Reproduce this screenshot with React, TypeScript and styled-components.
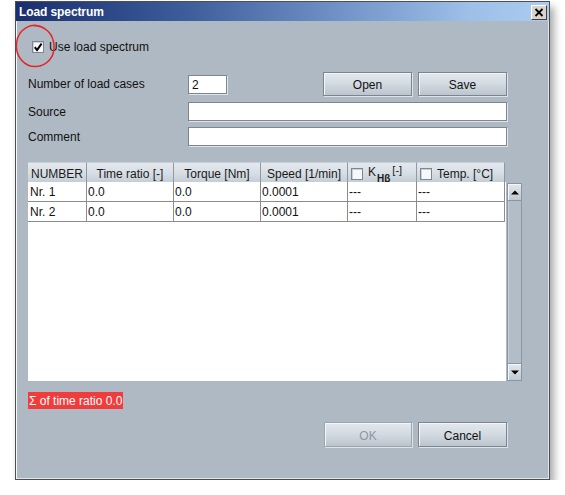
import React from "react";
import styled, { createGlobalStyle } from "styled-components";

const Global = createGlobalStyle`
  html, body { margin: 0; padding: 0; background: #ffffff; }
  body { font-family: "Liberation Sans", Arial, sans-serif; font-size: 12px; color: #111; }
  * { box-sizing: border-box; }
`;

const Window = styled.div`
  position: relative;
  margin: 1px 0 0 15px;
  width: 535px;
  height: 479px;
  border: 1px solid #4e4e4e;
  background: #afb9c3;
  box-shadow: inset 1px 0 0 #f4f7fa, inset -1px -1px 0 #dfe5eb, 4px 6px 8px rgba(0, 0, 0, 0.35);
  display: flex;
  flex-direction: column;
`;

const TitleBar = styled.div`
  height: 19px;
  display: flex;
  align-items: center;
  padding: 0 2px 0 3px;
  background: linear-gradient(to right, #1a2f6e 0%, #3a5a98 30%, #6f91c6 60%, #9dbfe8 85%, #acccf0 100%);
`;

const Title = styled.div`
  flex: 1;
  color: #ffffff;
  font-weight: bold;
  font-size: 12px;
  letter-spacing: -0.1px;
`;

const CloseButton = styled.div`
  width: 16px;
  height: 15px;
  background: #d8d4cc;
  border: 1px solid;
  border-color: #ffffff #404040 #404040 #ffffff;
  display: flex;
  align-items: center;
  justify-content: center;
  margin-top: 1px;
`;

const Content = styled.div`
  flex: 1;
  display: flex;
  flex-direction: column;
  padding: 0 0 0 12px;
`;

const CheckRow = styled.label`
  display: flex;
  align-items: center;
  gap: 5px;
  height: 14px;
  margin: 19px 0 0 4px;
  font-size: 12px;
`;

const Box = styled.span`
  width: 12px;
  height: 12px;
  flex: none;
  background: #f6f8fa;
  border: 1px solid #7c8792;
  box-shadow: inset 1px 1px 0 #c8d0d8;
  display: inline-flex;
  align-items: center;
  justify-content: center;
`;

const FormRow = styled.div<{ $top: number; $h: number }>`
  display: grid;
  grid-template-columns: 160px 1fr;
  align-items: center;
  margin-top: ${(p) => p.$top}px;
  height: ${(p) => p.$h}px;
  width: 479px;
`;

const Label = styled.span`
  font-size: 12px;
  color: #111;
`;

const Field = styled.div<{ $w?: number }>`
  width: ${(p) => (p.$w ? `${p.$w}px` : "100%")};
  height: 19px;
  background: #ffffff;
  border: 1px solid #7b8691;
  box-shadow: 1px 1px 0 #dfe5eb;
  padding: 2px 0 0 3px;
  font-size: 12px;
`;

const Line = styled.div`
  display: flex;
  align-items: center;
`;

const Spacer = styled.div`
  flex: 1;
`;

const Button = styled.div<{ $w: number; $h: number; $disabled?: boolean }>`
  width: ${(p) => p.$w}px;
  height: ${(p) => p.$h}px;
  display: flex;
  align-items: center;
  justify-content: center;
  padding-top: 2px;
  font-size: 12px;
  color: ${(p) => (p.$disabled ? "#8e98a2" : "#111")};
  border: 1px solid ${(p) => (p.$disabled ? "#9ba6b0" : "#7a8590")};
  background: linear-gradient(to bottom, #e3e8ee 0%, #d4dbe2 45%, #bcc5ce 100%);
  box-shadow: inset 1px 1px 0 #f4f7fa, 1px 1px 0 #dde3e9;
`;

const TableArea = styled.div`
  margin-top: 16px;
  display: grid;
  grid-template-columns: 478px 16px;
  grid-template-rows: 20px 199px;
`;

const cols = "59px 87px 87px 87px 69px 88px";

const HeaderRow = styled.div`
  display: grid;
  grid-template-columns: ${cols};
  height: 20px;
`;

const HeadCell = styled.div<{ $left?: boolean }>`
  display: flex;
  align-items: center;
  justify-content: ${(p) => (p.$left ? "flex-start" : "center")};
  gap: 5px;
  padding-left: ${(p) => (p.$left ? "3px" : "0")};
  padding-top: 1px;
  font-size: 12px;
  color: #1a1a1a;
  white-space: nowrap;
  background: linear-gradient(to bottom, #e4e9ee 0%, #d6dde4 50%, #c1cad3 100%);
  border-right: 1px solid #8e99a4;
  border-bottom: 1px solid #7f8a95;
  border-top: 1px solid #c7cfd7;
`;

const Corner = styled.div``;

const Body = styled.div`
  background: #ffffff;
  margin-right: 0;
`;

const BodyRow = styled.div`
  display: grid;
  grid-template-columns: ${cols};
  height: 20px;
`;

const Cell = styled.div<{ $pad: number }>`
  display: flex;
  align-items: center;
  padding-left: ${(p) => p.$pad}px;
  padding-top: 1px;
  font-size: 12px;
  color: #111;
  border-right: 1px solid #8c8c8c;
  border-bottom: 1px solid #8c8c8c;
  white-space: nowrap;
`;

const ScrollBar = styled.div`
  margin-left: 1px;
  width: 15px;
  display: flex;
  flex-direction: column;
  background: #b6c0ca;
  border: 1px solid #8a96a2;
  margin-top: 1px;
`;

const ScrollBtn = styled.div`
  height: 16px;
  display: flex;
  align-items: center;
  justify-content: center;
  background: linear-gradient(to bottom, #e2e7ec, #bfc8d1);
  box-shadow: inset 1px 1px 0 #f4f7fa;
`;

const Track = styled.div`
  flex: 1;
  border-top: 1px solid #8a96a2;
  border-bottom: 1px solid #8a96a2;
  background: #b3bdc7;
  box-shadow: inset 1px 0 0 #c7d0d8;
`;

const Sum = styled.div`
  align-self: flex-start;
  margin-top: 11px;
  height: 17px;
  padding: 1px 1px 0 1px;
  background: #f23b3b;
  color: #ffffff;
  font-size: 12px;
  display: flex;
  align-items: center;
`;

const Footer = styled.div`
  margin-top: 13px;
  width: 479px;
  display: flex;
  justify-content: flex-end;
  gap: 6px;
`;

const Annotation = styled.svg`
  position: absolute;
  left: -16px;
  top: -2px;
  pointer-events: none;
`;

const Sub = styled.sub`
  font-size: 10px;
  font-weight: bold;
  vertical-align: -4px;
  margin-left: 1px;
`;

const Sup = styled.span`
  font-size: 11px;
  vertical-align: 4px;
  margin-left: 2px;
`;

const KLabel = styled.span`
  font-size: 12px;
  vertical-align: 2px;
`;

const Check = () => (
  <svg width="10" height="10" viewBox="0 0 10 10">
    <path d="M1.8 5.2 L4 8 L8.6 1.6" fill="none" stroke="#000" strokeWidth="2" />
  </svg>
);

const rows = [
  ["Nr. 1", "0.0", "0.0", "0.0001", "---", "---"],
  ["Nr. 2", "0.0", "0.0", "0.0001", "---", "---"],
];

export default function App() {
  return (
    <>
      <Global />
      <Window>
        <TitleBar>
          <Title>Load spectrum</Title>
          <CloseButton>
            <svg width="10" height="9" viewBox="0 0 10 9">
              <path d="M1.5 1 L8.5 8 M8.5 1 L1.5 8" stroke="#000" strokeWidth="1.8" />
            </svg>
          </CloseButton>
        </TitleBar>
        <Content>
          <CheckRow>
            <Box>
              <Check />
            </Box>
            Use load spectrum
          </CheckRow>
          <FormRow $top={18} $h={24}>
            <Label>Number of load cases</Label>
            <Line>
              <Field $w={39}>2</Field>
              <Spacer />
              <Button $w={89} $h={24}>Open</Button>
              <Button $w={89} $h={24} style={{ marginLeft: 6 }}>Save</Button>
            </Line>
          </FormRow>
          <FormRow $top={6} $h={19}>
            <Label>Source</Label>
            <Field />
          </FormRow>
          <FormRow $top={6} $h={19}>
            <Label>Comment</Label>
            <Field />
          </FormRow>
          <TableArea>
            <HeaderRow>
              <HeadCell>NUMBER</HeadCell>
              <HeadCell>Time ratio [-]</HeadCell>
              <HeadCell>Torque [Nm]</HeadCell>
              <HeadCell>Speed [1/min]</HeadCell>
              <HeadCell $left>
                <Box />
                <span>
                  <KLabel>K</KLabel>
                  <Sub>Hβ</Sub>
                  <Sup>[-]</Sup>
                </span>
              </HeadCell>
              <HeadCell $left>
                <Box />
                Temp. [°C]
              </HeadCell>
            </HeaderRow>
            <Corner />
            <Body>
              {rows.map((r) => (
                <BodyRow key={r[0]}>
                  {r.map((c, i) => (
                    <Cell key={i} $pad={i === 0 ? 2 : 1}>
                      {c}
                    </Cell>
                  ))}
                </BodyRow>
              ))}
            </Body>
            <ScrollBar>
              <ScrollBtn>
                <svg width="8" height="5" viewBox="0 0 8 5">
                  <path d="M0 4.5 L4 0.5 L8 4.5 Z" fill="#000" />
                </svg>
              </ScrollBtn>
              <Track />
              <ScrollBtn>
                <svg width="8" height="5" viewBox="0 0 8 5">
                  <path d="M0 0.5 L4 4.5 L8 0.5 Z" fill="#000" />
                </svg>
              </ScrollBtn>
            </ScrollBar>
          </TableArea>
          <Sum>Σ of time ratio 0.0</Sum>
          <Footer>
            <Button $w={88} $h={25} $disabled>OK</Button>
            <Button $w={89} $h={25}>Cancel</Button>
          </Footer>
        </Content>
        <Annotation width="70" height="75" viewBox="0 0 70 75">
          <path
            d="M44 28 C32 21, 18 29, 16.5 43 C15 57, 25 67, 36 66.5 C47 66, 55 57, 54 45 C53 34, 46 26, 33 25.5"
            fill="none"
            stroke="#e4262b"
            strokeWidth="1.5"
          />
        </Annotation>
      </Window>
    </>
  );
}
